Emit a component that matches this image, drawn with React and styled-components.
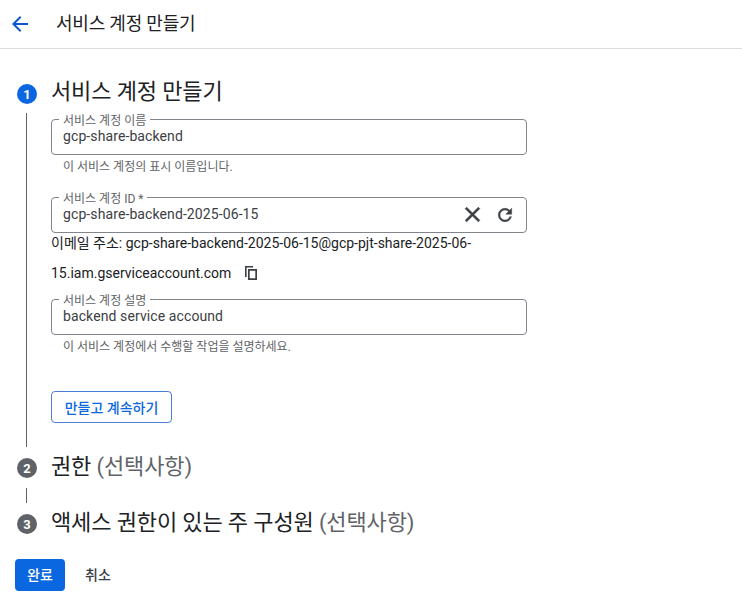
import React from "react";
import styled, { createGlobalStyle } from "styled-components";
import { MdArrowBack, MdClose, MdRefresh } from "react-icons/md";

const FONT = `Roboto, "Noto Sans CJK KR", sans-serif`;

const Global = createGlobalStyle`
  html, body { margin: 0; padding: 0; background: #fff; }
  body { font-family: ${FONT}; color: #202124; width: 742px; height: 615px; overflow: hidden; }
  * { box-sizing: border-box; }
`;

const Page = styled.div`
  display: flex;
  flex-direction: column;
  height: 615px;
`;

const Header = styled.header`
  height: 49px;
  display: flex;
  align-items: center;
  border-bottom: 1px solid #dadce0;
  padding-left: 8px;
`;

const BackButton = styled.span`
  display: flex;
  width: 24px;
  color: #0b57d0;
  margin-right: 24px;
`;

const HeaderTitle = styled.h1`
  margin: 0;
  font-size: 18px;
  font-weight: 400;
  line-height: 24px;
  letter-spacing: -0.2px;
  color: #202124;
`;

const Steps = styled.div`
  display: flex;
  flex-direction: column;
  padding: 29px 0 0 17px;
`;

const StepHead = styled.div`
  display: flex;
  align-items: flex-start;
  height: 32px;
  gap: 14px;
`;

const Badge = styled.span`
  width: 20px;
  height: 20px;
  margin-top: ${(p) => p.$top}px;
  border-radius: 50%;
  flex: none;
  display: flex;
  align-items: center;
  justify-content: center;
  background: ${(p) => (p.$active ? "#0b67e0" : "#5f6368")};
  color: #fff;
  font-size: 13px;
  font-weight: 700;
`;

const StepTitle = styled.h2`
  margin: ${(p) => p.$top}px 0 0;
  font-size: 22px;
  font-weight: 400;
  line-height: 28px;
  letter-spacing: -0.13px;
  color: #202124;
  white-space: nowrap;
`;

const Optional = styled.span`
  color: #5f6368;
`;

const Body = styled.div`
  margin: 3px 0 0 9px;
  border-left: 1px solid #5f6368;
  padding: 6px 0 0 24px;
  height: 334px;
  width: 501px;
`;

const Connector = styled.div`
  margin: 9px 0 0 9px;
  border-left: 1px solid #5f6368;
  height: 15px;
`;

const Fieldset = styled.fieldset`
  margin: ${(p) => p.$top}px 0 0;
  height: 36px;
  padding: 0 10px 0 11px;
  border: 1px solid #80868b;
  border-radius: 4px;
  display: flex;
  align-items: center;
  min-width: 0;
`;

const Legend = styled.legend`
  font-size: 12px;
  line-height: 12px;
  color: #5f6368;
  padding: 0 4px;
  margin-left: -4px;
  height: 1px;
  transform: translateY(-4px);
`;

const FieldValue = styled.span`
  flex: 1;
  font-size: 14px;
  line-height: 20px;
  letter-spacing: 0.1px;
  color: #3c4043;
  margin-top: -2px;
`;

const FieldIcons = styled.span`
  display: flex;
  align-items: center;
  gap: 10px;
  color: #3c4043;
  margin-top: -1px;
  margin-right: 1px;
  svg path:not([fill="none"]) { stroke: currentColor; stroke-width: 0.6px; }
`;

const CopyIcon = styled.svg`
  display: inline-block;
  width: 16px;
  height: 16px;
  vertical-align: -3px;
  margin-left: 12px;
  fill: #3c4043;
`;

const Hint = styled.p`
  margin: 5px 0 0 12px;
  font-size: 12px;
  line-height: 14px;
  color: #5f6368;
`;

const EmailBlock = styled.div`
  font-size: 14px;
  line-height: 30px;
  color: #202124;
  margin-top: -5px;
  height: 71px;
`;

const OutlineButton = styled.button`
  margin-top: 37px;
  display: block;
  height: 32px;
  width: 121px;
  padding: 0;
  background: #fff;
  border: 1px solid #4a7fd6;
  border-radius: 4px;
  color: #0b67e0;
  font-family: ${FONT};
  font-size: 14px;
  font-weight: 500;
`;

const Footer = styled.div`
  display: flex;
  align-items: center;
  gap: 8px;
  padding: 24px 0 0 15px;
`;

const PrimaryButton = styled.button`
  width: 50px;
  height: 32px;
  border: 0;
  border-radius: 4px;
  background: #0b67e0;
  color: #fff;
  font-family: ${FONT};
  font-size: 14px;
  font-weight: 500;
  padding: 0 0 2px;
`;

const TextButton = styled.button`
  width: 50px;
  height: 32px;
  border: 0;
  background: transparent;
  color: #3c4043;
  font-family: ${FONT};
  font-size: 14px;
  font-weight: 500;
  padding: 0 0 2px;
`;

export default function App() {
  return (
    <Page>
      <Global />
      <Header>
        <BackButton><MdArrowBack size={24} /></BackButton>
        <HeaderTitle>서비스 계정 만들기</HeaderTitle>
      </Header>
      <Steps>
        <StepHead>
          <Badge $active $top={6}>1</Badge>
          <StepTitle $top={0}>서비스 계정 만들기</StepTitle>
        </StepHead>
        <Body>
          <Fieldset $top={0}>
            <Legend>서비스 계정 이름</Legend>
            <FieldValue>gcp-share-backend</FieldValue>
          </Fieldset>
          <Hint>이 서비스 계정의 표시 이름입니다.</Hint>
          <Fieldset $top={23}>
            <Legend>서비스 계정 ID *</Legend>
            <FieldValue>gcp-share-backend-2025-06-15</FieldValue>
            <FieldIcons>
              <MdClose size={25} />
              <MdRefresh size={20} />
            </FieldIcons>
          </Fieldset>
          <EmailBlock>
            이메일 주소: gcp-share-backend-2025-06-15@gcp-pjt-share-2025-06-
            <br />
            15.iam.gserviceaccount.com
            <CopyIcon viewBox="0 0 16 16">
              <path fillRule="evenodd" d="M2 1h8v1.6H3.6V12H2V1zM5 4h9v11H5V4zm1.7 1.7v7.6h5.6V5.7H6.7z" />
            </CopyIcon>
          </EmailBlock>
          <Fieldset $top={0}>
            <Legend>서비스 계정 설명</Legend>
            <FieldValue>backend service accound</FieldValue>
          </Fieldset>
          <Hint>이 서비스 계정에서 수행할 작업을 설명하세요.</Hint>
          <OutlineButton>만들고 계속하기</OutlineButton>
        </Body>
        <StepHead>
          <Badge $top={11}>2</Badge>
          <StepTitle $top={6}>권한 <Optional>(선택사항)</Optional></StepTitle>
        </StepHead>
        <Connector />
        <StepHead>
          <Badge $top={11}>3</Badge>
          <StepTitle $top={6}>액세스 권한이 있는 주 구성원 <Optional>(선택사항)</Optional></StepTitle>
        </StepHead>
      </Steps>
      <Footer>
        <PrimaryButton>완료</PrimaryButton>
        <TextButton>취소</TextButton>
      </Footer>
    </Page>
  );
}
